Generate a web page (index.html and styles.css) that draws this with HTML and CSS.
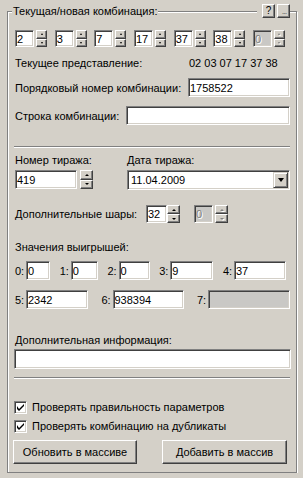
FILE: index.html
```html
<!DOCTYPE html>
<html lang="ru">
<head>
    <meta charset="UTF-8">
    <meta name="viewport" content="width=device-width, initial-scale=1.0">
    <title>Комбинация</title>
    <link rel="stylesheet" href="styles.css">
</head>
<body>
    <div class="group">
        <div class="group-head">
            <span class="group-title">Текущая/новая комбинация:</span>
            <span class="head-tools">
                <button class="tiny-btn">?</button>
                <button class="tiny-btn dots"><span>...</span></button>
            </span>
        </div>

        <!-- Balls of the current combination -->
        <div class="spins">
            <div class="spin"><input class="edit" value="2"><span class="updown"><span class="ud"><i class="up"></i></span><span class="ud"><i class="down"></i></span></span></div>
            <div class="spin"><input class="edit" value="3"><span class="updown"><span class="ud"><i class="up"></i></span><span class="ud"><i class="down"></i></span></span></div>
            <div class="spin"><input class="edit" value="7"><span class="updown"><span class="ud"><i class="up"></i></span><span class="ud"><i class="down"></i></span></span></div>
            <div class="spin"><input class="edit" value="17"><span class="updown"><span class="ud"><i class="up"></i></span><span class="ud"><i class="down"></i></span></span></div>
            <div class="spin"><input class="edit" value="37"><span class="updown"><span class="ud"><i class="up"></i></span><span class="ud"><i class="down"></i></span></span></div>
            <div class="spin"><input class="edit" value="38"><span class="updown"><span class="ud"><i class="up"></i></span><span class="ud"><i class="down"></i></span></span></div>
            <div class="spin off"><input class="edit" value="0" disabled><span class="updown"><span class="ud"><i class="up"></i></span><span class="ud"><i class="down"></i></span></span></div>
        </div>

        <div class="row current">
            <span class="current-label">Текущее представление:</span>
            <span>02 03 07 17 37 38</span>
        </div>

        <div class="row line-num">
            <label for="seqNum">Порядковый номер комбинации:</label>
            <input class="edit seq" id="seqNum" value="1758522">
        </div>

        <div class="row line-str">
            <label for="comboStr">Строка комбинации:</label>
            <input class="edit str" id="comboStr" value="">
        </div>

        <hr class="sep first-sep">

        <div class="draw">
            <div class="draw-num">
                <div class="caption">Номер тиража:</div>
                <div class="spin big"><input class="edit" value="419"><span class="updown"><span class="ud"><i class="up"></i></span><span class="ud"><i class="down"></i></span></span></div>
            </div>
            <div class="draw-date">
                <div class="caption">Дата тиража:</div>
                <div class="combo"><span class="combo-text">11.04.2009</span><span class="drop"><i></i></span></div>
            </div>
        </div>

        <div class="row balls">
            <span class="balls-label">Дополнительные шары:</span>
            <div class="spin big joined"><input class="edit" value="32"><span class="updown"><span class="ud"><i class="up"></i></span><span class="ud"><i class="down"></i></span></span></div>
            <div class="spin big off second"><input class="edit" value="0" disabled><span class="updown"><span class="ud"><i class="up"></i></span><span class="ud"><i class="down"></i></span></span></div>
        </div>

        <div class="caption wins-title">Значения выигрышей:</div>
        <div class="wins wins-1">
            <div class="win"><span class="win-label">0:</span><input class="edit w24" value="0"></div>
            <div class="win"><span class="win-label">1:</span><input class="edit w27" value="0"></div>
            <div class="win"><span class="win-label">2:</span><input class="edit w31" value="0"></div>
            <div class="win"><span class="win-label">3:</span><input class="edit w43" value="9"></div>
            <div class="win"><span class="win-label">4:</span><input class="edit w52" value="37"></div>
        </div>
        <div class="wins wins-2">
            <div class="win"><span class="win-label">5:</span><input class="edit w62" value="2342"></div>
            <div class="win"><span class="win-label">6:</span><input class="edit w71" value="938394"></div>
            <div class="win"><span class="win-label">7:</span><input class="edit w82" value="" disabled></div>
        </div>

        <div class="caption info-title">Дополнительная информация:</div>
        <input class="edit info" value="">

        <hr class="sep">

        <label class="check first-check"><span class="box"><svg width="7" height="7" viewBox="0 0 7 7"><path d="M0 2v3l2 2 5-5V0L2 5z"/></svg></span>Проверять правильность параметров</label>
        <label class="check"><span class="box"><svg width="7" height="7" viewBox="0 0 7 7"><path d="M0 2v3l2 2 5-5V0L2 5z"/></svg></span>Проверять комбинацию на дубликаты</label>

        <div class="actions">
            <button class="btn update">Обновить в массиве</button>
            <button class="btn add">Добавить в массив</button>
        </div>
    </div>
</body>
</html>
```

FILE: styles.css
```css
* {
    box-sizing: border-box;
}

body {
    margin: 0;
    padding: 11px 6px 0 7px;
    background-color: #d4d0c8;
    font-family: "Liberation Sans", Arial, sans-serif;
    font-size: 11px;
    line-height: 14px;
    color: #000;
}

/* etched group box */
.group {
    border: 1px solid #808080;
    box-shadow: 1px 1px 0 #fff, inset 1px 1px 0 #fff;
    padding: 0 6px 8px 7px;
}

.group-head {
    display: flex;
    align-items: center;
    justify-content: space-between;
    height: 14px;
    margin-top: -8px;
}

.group-title {
    background: #d4d0c8;
    margin-left: -3px;
    padding: 0 1px;
}

.head-tools {
    display: flex;
    gap: 2px;
    padding-left: 5px;
    background: #d4d0c8;
}

button {
    font: inherit;
    color: #000;
    margin: 0;
    padding: 0;
    background: #d4d0c8;
    border: 1px solid;
    border-color: #fff #404040 #404040 #fff;
    box-shadow: inset -1px -1px 0 #808080;
    border-radius: 0;
}

.tiny-btn {
    display: flex;
    align-items: center;
    justify-content: center;
    width: 13px;
    height: 14px;
    font-size: 10px;
    line-height: 10px;
}

.tiny-btn.dots {
    color: #6f6f6f;
}

.tiny-btn.dots span {
    font-size: 9px;
    line-height: 9px;
    letter-spacing: -1px;
    margin: 1px 0 0 1px;
}

/* sunken edit */
.edit {
    font: inherit;
    color: #000;
    margin: 0;
    padding: 0 1px;
    height: 19px;
    background: #fff;
    border: 1px solid;
    border-color: #808080 #fff #fff #808080;
    box-shadow: inset 1px 1px 0 #404040, inset -1px -1px 0 #d4d0c8;
    border-radius: 0;
    outline: none;
}

.edit:disabled {
    background: #c9c8c5;
    color: #808080;
    -webkit-text-fill-color: #808080;
    text-shadow: 1px 1px 0 #fff;
}

/* spin controls */
.spins {
    display: flex;
    justify-content: space-between;
    margin: 12px 5px 0 0;
}

.spin {
    display: flex;
    gap: 2px;
}

.spin .edit {
    width: 19px;
    height: 17px;
}

.updown {
    display: flex;
    flex-direction: column;
    width: 11px;
}

.ud {
    flex: 1 1 0;
    display: flex;
    align-items: center;
    justify-content: center;
    background: #d4d0c8;
    border: 1px solid;
    border-color: #fff #404040 #404040 #fff;
    box-shadow: inset -1px -1px 0 #808080;
}

.ud i {
    width: 1px;
    height: 0;
    border-left: 1px solid transparent;
    border-right: 1px solid transparent;
}

.ud i.up {
    border-bottom: 2px solid #000;
}

.ud i.down {
    border-top: 2px solid #000;
}

.off .ud i.up {
    border-bottom-color: #808080;
}

.off .ud i.down {
    border-top-color: #808080;
}

.off .ud i {
    filter: drop-shadow(1px 1px 0 #fff);
}

.spin.big .updown {
    width: 13px;
}

.spin.big .ud i {
    border-left-width: 2px;
    border-right-width: 2px;
}

.row {
    display: flex;
    align-items: center;
}

.current {
    margin-top: 9px;
}

.current-label {
    width: 174px;
}

.line-num {
    margin-top: 8px;
}

.line-num .seq {
    margin-left: auto;
    width: 102px;
}

.line-str {
    margin-top: 9px;
}

.line-str .str {
    margin-left: auto;
    width: 164px;
}

.sep {
    margin: 8px 0 0 -1px;
    height: 0;
    border: 0;
    border-top: 1px solid #808080;
    border-bottom: 1px solid #fff;
}

.sep.first-sep {
    margin-top: 21px;
}

/* draw number and date */
.draw {
    display: flex;
    margin-top: 5px;
}

.draw-num {
    width: 112px;
}

.draw .spin {
    margin-top: 3px;
    gap: 3px;
}

.draw .spin .edit {
    width: 62px;
    height: 19px;
}

.draw-date {
    flex: 1;
}

.combo {
    display: flex;
    align-items: center;
    margin-top: 3px;
    height: 20px;
    padding: 2px 1px 2px 3px;
    background: #fff;
    border: 1px solid;
    border-color: #808080 #fff #fff #808080;
    box-shadow: inset 1px 1px 0 #404040, inset -1px -1px 0 #d4d0c8;
}

.combo-text {
    flex: 1;
}

.drop {
    display: flex;
    align-items: center;
    justify-content: center;
    width: 15px;
    height: 16px;
    background: #d4d0c8;
    border: 1px solid;
    border-color: #d4d0c8 #404040 #404040 #d4d0c8;
    box-shadow: inset 1px 1px 0 #fff, inset -1px -1px 0 #808080;
}

.drop i {
    width: 1px;
    height: 0;
    border-left: 3px solid transparent;
    border-right: 3px solid transparent;
    border-top: 4px solid #000;
}

/* extra balls */
.balls {
    margin-top: 15px;
}

.balls-label {
    width: 131px;
}

.balls .spin .edit {
    width: 21px;
    height: 18px;
}

.balls .spin.joined {
    gap: 0;
}

.balls .spin.second {
    margin-left: 14px;
}

.balls .spin.second .edit {
    width: 19px;
}

/* winnings */
.caption {
    height: 14px;
}

.wins-title {
    margin-top: 17px;
}

.wins {
    display: flex;
    justify-content: space-between;
}

.wins-1 {
    margin: 7px 4px 0 0;
}

.wins-2 {
    margin-top: 10px;
}

.win {
    display: flex;
    align-items: center;
    gap: 2px;
}

.win-label {
    width: 9px;
}

.w24 { width: 24px; }
.w27 { width: 27px; }
.w31 { width: 31px; }
.w43 { width: 43px; }
.w52 { width: 52px; }
.w62 { width: 62px; }
.w71 { width: 71px; }
.w82 { width: 82px; }

.info-title {
    margin-top: 24px;
}

.edit.info {
    display: block;
    margin: 2px 0 0 -1px;
    width: 277px;
    height: 20px;
}

/* checkboxes */
.check {
    display: flex;
    align-items: center;
    gap: 5px;
    height: 14px;
    margin: 5px 0 0 -1px;
}

.check.first-check {
    margin-top: 21px;
}

.box {
    display: flex;
    align-items: center;
    justify-content: center;
    width: 13px;
    height: 13px;
    background: #fff;
    border: 1px solid;
    border-color: #808080 #fff #fff #808080;
    box-shadow: inset 1px 1px 0 #404040, inset -1px -1px 0 #d4d0c8;
}

.actions {
    display: flex;
    margin: 7px 3px 0 -2px;
}

.btn {
    height: 24px;
}

.btn.update {
    width: 124px;
}

.btn.add {
    margin-left: auto;
    width: 125px;
}
```
